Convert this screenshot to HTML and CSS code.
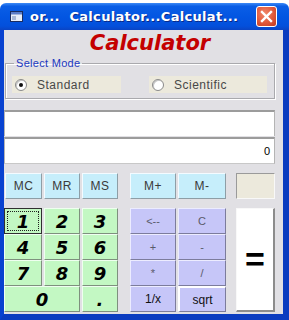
FILE: index.html
```html
<!DOCTYPE html>
<html>
<head>
<meta charset="utf-8">
<link rel="stylesheet" href="styles.css">
</head>
<body>
<div class="window">
  <div class="titlebar">
    <svg class="appicon" width="13" height="11" viewBox="0 0 13 11">
      <rect x="0.5" y="0.5" width="12" height="10" fill="#e8eef8" stroke="#1a2c60"/>
      <rect x="1" y="1" width="11" height="2.5" fill="#5a7cc8"/>
      <rect x="2" y="5" width="4" height="4" fill="#a8b8d8"/>
    </svg>
    <span class="title">or...&nbsp; Calculator...Calculat...</span>
    <div class="close">
      <svg width="13" height="13" viewBox="0 0 13 13"><path d="M2 2 L11 11 M11 2 L2 11" stroke="#fff" stroke-width="2.4" stroke-linecap="square"/></svg>
    </div>
  </div>
  <div class="frame">
    <h1 class="heading">Calculator</h1>
    <fieldset class="mode">
      <legend>Select Mode</legend>
      <div class="opts">
        <div class="opt opt-std"><span class="radio checked"></span><span class="optlabel">Standard</span></div>
        <div class="opt opt-sci"><span class="radio"></span><span class="optlabel">Scientific</span></div>
      </div>
    </fieldset>
    <div class="display"></div>
    <div class="display second">0</div>
    <div class="memrow">
      <div class="btn mem">MC</div>
      <div class="btn mem">MR</div>
      <div class="btn mem">MS</div>
      <div class="btn mem c5">M+</div>
      <div class="btn mem">M-</div>
      <div class="membox"></div>
    </div>
    <div class="keypad">
      <div class="btn num focus"><span class="focusring">1</span></div>
      <div class="btn num">2</div>
      <div class="btn num">3</div>
      <div class="btn op c5">&lt;--</div>
      <div class="btn op">C</div>
      <div class="btn eq">=</div>
      <div class="btn num">4</div>
      <div class="btn num">5</div>
      <div class="btn num">6</div>
      <div class="btn op c5">+</div>
      <div class="btn op">-</div>
      <div class="btn num">7</div>
      <div class="btn num">8</div>
      <div class="btn num">9</div>
      <div class="btn op c5">*</div>
      <div class="btn op">/</div>
      <div class="btn num zero">0</div>
      <div class="btn num">.</div>
      <div class="btn op dark c5">1/x</div>
      <div class="btn op dark sqrt">sqrt</div>
    </div>
  </div>
</div>
</body>
</html>
```
FILE: styles.css
```css
html, body {
  margin: 0;
  padding: 0;
  background: #ffffff;
}
body {
  width: 289px;
  height: 320px;
  overflow: hidden;
}
.window {
  margin-top: 3px;
  width: 289px;
  height: 317px;
  display: flex;
  flex-direction: column;
}
.titlebar {
  height: 27px;
  flex: none;
  display: flex;
  align-items: center;
  background: linear-gradient(#3d8af5 0%, #0a5ee6 12%, #0356e2 50%, #0350dc 85%, #0a44c4 100%);
  border-radius: 6px 6px 0 0;
}
.appicon {
  margin-left: 10px;
  flex: none;
}
.title {
  margin-left: 7px;
  color: #fff;
  font-family: "DejaVu Sans", sans-serif;
  font-weight: bold;
  font-size: 13px;
  letter-spacing: 0.3px;
  text-shadow: 1px 1px 0 #0a2a8a;
  white-space: nowrap;
  flex: 1;
  overflow: hidden;
}
.close {
  flex: none;
  width: 19px;
  height: 19px;
  margin-right: 12px;
  border: 1px solid #ffffff;
  border-radius: 3px;
  background: radial-gradient(circle at 40% 35%, #f0886a 0%, #e0583a 55%, #c03a20 100%);
  display: flex;
  align-items: center;
  justify-content: center;
}
.frame {
  flex: 1;
  background: #e1e0e4;
  border-left: 4px solid #0842d0;
  border-right: 6px solid #0a3cc0;
  border-bottom: 6px solid #0a3cc0;
  display: flex;
  flex-direction: column;
}
.heading {
  margin: 0;
  padding-left: 13px;
  height: 27px;
  line-height: 27px;
  text-align: center;
  font-family: "DejaVu Sans", sans-serif;
  font-weight: bold;
  font-style: italic;
  font-size: 21px;
  color: #c40000;
}
.mode {
  margin: 0 8px 0 1px;
  padding: 0 6px 5px 6px;
  border: 1px solid #a9a9ad;
  box-shadow: 1px 1px 0 #ffffff, inset 1px 1px 0 #ffffff;
  min-width: 0;
}
.mode legend {
  margin-left: 2px;
  padding: 0 2px;
  font-family: "Liberation Sans", sans-serif;
  font-size: 11px;
  line-height: 12px;
  letter-spacing: 0.3px;
  color: #2038c0;
}
.opts {
  display: flex;
  gap: 28px;
  margin-top: 7px;
}
.opt {
  height: 17px;
  background: #ece9dc;
  display: flex;
  align-items: center;
  font-family: "Liberation Sans", sans-serif;
  font-size: 12px;
  letter-spacing: 0.5px;
  color: #484848;
}
.opt-std { width: 109px; }
.opt-sci { width: 118px; }
.radio {
  width: 10px;
  height: 10px;
  margin-left: 3px;
  margin-right: 10px;
  border-radius: 50%;
  border: 1px solid #8a8a8a;
  background: #fff;
  box-shadow: inset 1px 1px 0 #c8c8c8;
  position: relative;
}
.radio.checked::after {
  content: "";
  position: absolute;
  left: 3px;
  top: 3px;
  width: 4px;
  height: 4px;
  border-radius: 50%;
  background: #101010;
}
.display {
  margin: 11px 8px 0 0;
  height: 24px;
  background: #ffffff;
  border-top: 2px solid #9c9c9c;
  border-left: 1px solid #b4b4b4;
  border-right: 1px solid #b4b4b4;
  font-family: "Liberation Sans", sans-serif;
  font-size: 11px;
  text-align: right;
  padding-right: 4px;
  line-height: 24px;
  color: #000;
}
.display.second {
  margin-top: 1px;
  border-bottom: 1px solid #c8c8c8;
}
.memrow, .keypad {
  display: grid;
  grid-template-columns: 38px 36px 36px 56px 48px 47px;
  column-gap: 2px;
}
.memrow {
  margin-top: 9px;
  grid-template-rows: 26px;
}
.keypad {
  margin-top: 9px;
  grid-template-rows: 26px 26px 26px 26px;
}
.c5 {
  grid-column: 4;
  margin-left: 10px;
}
.btn {
  box-sizing: border-box;
  display: flex;
  align-items: center;
  justify-content: center;
  font-family: "Liberation Sans", sans-serif;
}
.mem {
  background: #c6eefb;
  border-top: 1px solid #f4fbff;
  border-left: 1px solid #f4fbff;
  border-right: 1px solid #8e9ea6;
  border-bottom: 1px solid #8e9ea6;
  font-size: 12px;
  letter-spacing: 0.4px;
  color: #3a3a3a;
}
.memrow .mem:first-child {
  margin-left: 1px;
}
.membox {
  margin-left: 8px;
  background: #ece9dc;
  border: 1px solid #9a9a9a;
  border-right-color: #f8f8f8;
  border-bottom-color: #f8f8f8;
}
.num {
  background: #c3f8c3;
  border-top: 1px solid #effff0;
  border-left: 1px solid #effff0;
  border-right: 1px solid #7e907e;
  border-bottom: 1px solid #7e907e;
  font-family: "DejaVu Sans", sans-serif;
  font-weight: bold;
  font-style: italic;
  font-size: 18px;
  color: #000;
}
.num.focus {
  border: 1px solid #303030;
}
.focusring {
  box-sizing: border-box;
  width: 32px;
  height: 20px;
  border: 1px dotted #202020;
  display: flex;
  align-items: center;
  justify-content: center;
}
.zero {
  grid-column: 1 / span 2;
}
.op {
  background: #c6c6f8;
  border-top: 1px solid #ececff;
  border-left: 1px solid #ececff;
  border-right: 1px solid #7c7c9c;
  border-bottom: 1px solid #7c7c9c;
  font-size: 11px;
  color: #5a5a6a;
}
.op.dark {
  color: #101010;
  font-size: 12px;
}
.sqrt {
  border-top: 2px solid #ffffff;
  border-left: 2px solid #ffffff;
}
.eq {
  grid-column: 6;
  grid-row: 1 / span 4;
  margin-left: 8px;
  background: #ffffff;
  border-top: 1px solid #f8f8f8;
  border-left: 1px solid #f8f8f8;
  border-right: 2px solid #8c8c8c;
  border-bottom: 2px solid #8c8c8c;
  font-family: "Liberation Sans", sans-serif;
  font-weight: bold;
  font-size: 34px;
  color: #000;
}
```
